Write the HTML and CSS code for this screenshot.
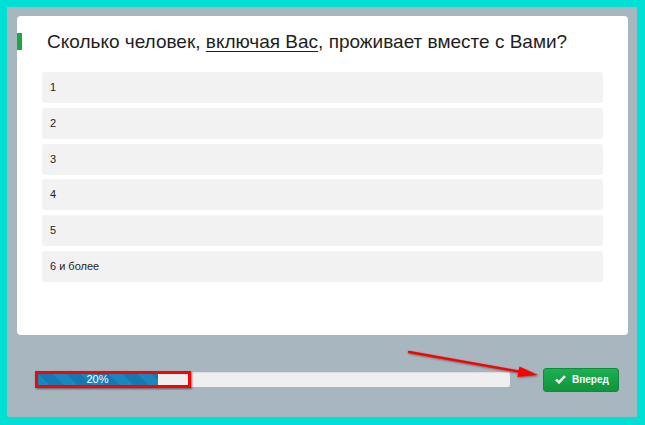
FILE: index.html
```html
<!DOCTYPE html>
<html lang="ru">
<head>
    <meta charset="UTF-8">
    <title>Опрос</title>
    <link rel="stylesheet" href="styles.css">
</head>
<body>
    <div class="frame">
        <div class="card">
            <h2 class="question">Сколько человек, <u>включая Вас</u>, проживает вместе с Вами?</h2>
            <div class="answers">
                <div class="answer">1</div>
                <div class="answer">2</div>
                <div class="answer">3</div>
                <div class="answer">4</div>
                <div class="answer">5</div>
                <div class="answer">6 и более</div>
            </div>
        </div>
        <div class="footer">
            <div class="track">
                <div class="fill" style="width: 121px">20%</div>
            </div>
            <button class="next">
                <svg width="11" height="9" viewBox="0 0 11 9"><path d="M1 4.6 L4 7.4 L10 1.2" fill="none" stroke="#fff" stroke-width="2.4"/></svg>
                Вперед
            </button>
        </div>
        <!-- annotation -->
        <div class="mark"></div>
        <svg class="arrow" width="145" height="40" viewBox="0 0 145 40">
            <line x1="2" y1="5" x2="113" y2="24.8" stroke="#f00" stroke-width="2.6" stroke-linecap="round"/>
            <polygon points="131,28 110.2,30 112.4,19.4" fill="#f00"/>
        </svg>
    </div>
</body>
</html>
```
FILE: styles.css
```css
body {
    margin: 0;
    background: #00e0d5;
    font-family: "Liberation Sans", Arial, sans-serif;
}
.frame {
    position: relative;
    margin: 7px 8px 8px 7px;
    height: 410px;
    background: #a8b7bf;
    border-radius: 0 0 0 3px;
    box-sizing: border-box;
    padding: 9px 9px 0 10px;
}
.card {
    height: 319px;
    background: #fff;
    border-radius: 4px;
    box-sizing: border-box;
    padding: 17px 25px 0 0;
}
.question {
    margin: 0;
    padding-left: 25px;
    border-left: 5px solid #18a84a;
    height: 17px;
    line-height: 18px;
    font-size: 19px;
    font-weight: normal;
    color: #1e1e1e;
}
.question u {
    text-underline-offset: 3px;
}
.answers {
    margin: 22px 0 0 25px;
}
.answer {
    height: 31px;
    line-height: 31px;
    margin-bottom: 4.8px;
    padding-left: 8px;
    background: #f2f2f2;
    border-radius: 3px;
    font-size: 11px;
    color: #222;
}
.footer {
    display: flex;
    align-items: center;
    height: 75px;
    padding: 7px 0 0 20px;
    margin-left: -10px;
}
.track {
    width: 473px;
    height: 15px;
    margin-left: 10px;
    background: #efefef;
    border-radius: 2px;
    box-shadow: inset 0 1px 1px rgba(0,0,0,.08);
    overflow: hidden;
}
.fill {
    height: 15px;
    line-height: 15px;
    text-align: center;
    font-size: 11px;
    color: #fff;
    background: repeating-linear-gradient(45deg, #1a86be 0 10px, #1579b0 10px 20px);
}
.next {
    margin-left: 33px;
    width: 76px;
    height: 24px;
    display: flex;
    align-items: center;
    gap: 6px;
    padding: 0 0 0 11px;
    border: 1px solid #0f8c3a;
    border-radius: 3px;
    background: linear-gradient(#1cb050, #10943c);
    color: #fff;
    font-family: "Liberation Sans", Arial, sans-serif;
    font-size: 10px;
    font-weight: bold;
}
.mark {
    position: absolute;
    left: 28px;
    top: 364px;
    width: 150px;
    height: 11px;
    border: 3px solid #f00;
    box-shadow: 1px 1px 2px rgba(0,0,0,.5);
}
.arrow {
    position: absolute;
    left: 400px;
    top: 340px;
    filter: drop-shadow(1px 1px 1px rgba(0,0,0,.4));
}
```
